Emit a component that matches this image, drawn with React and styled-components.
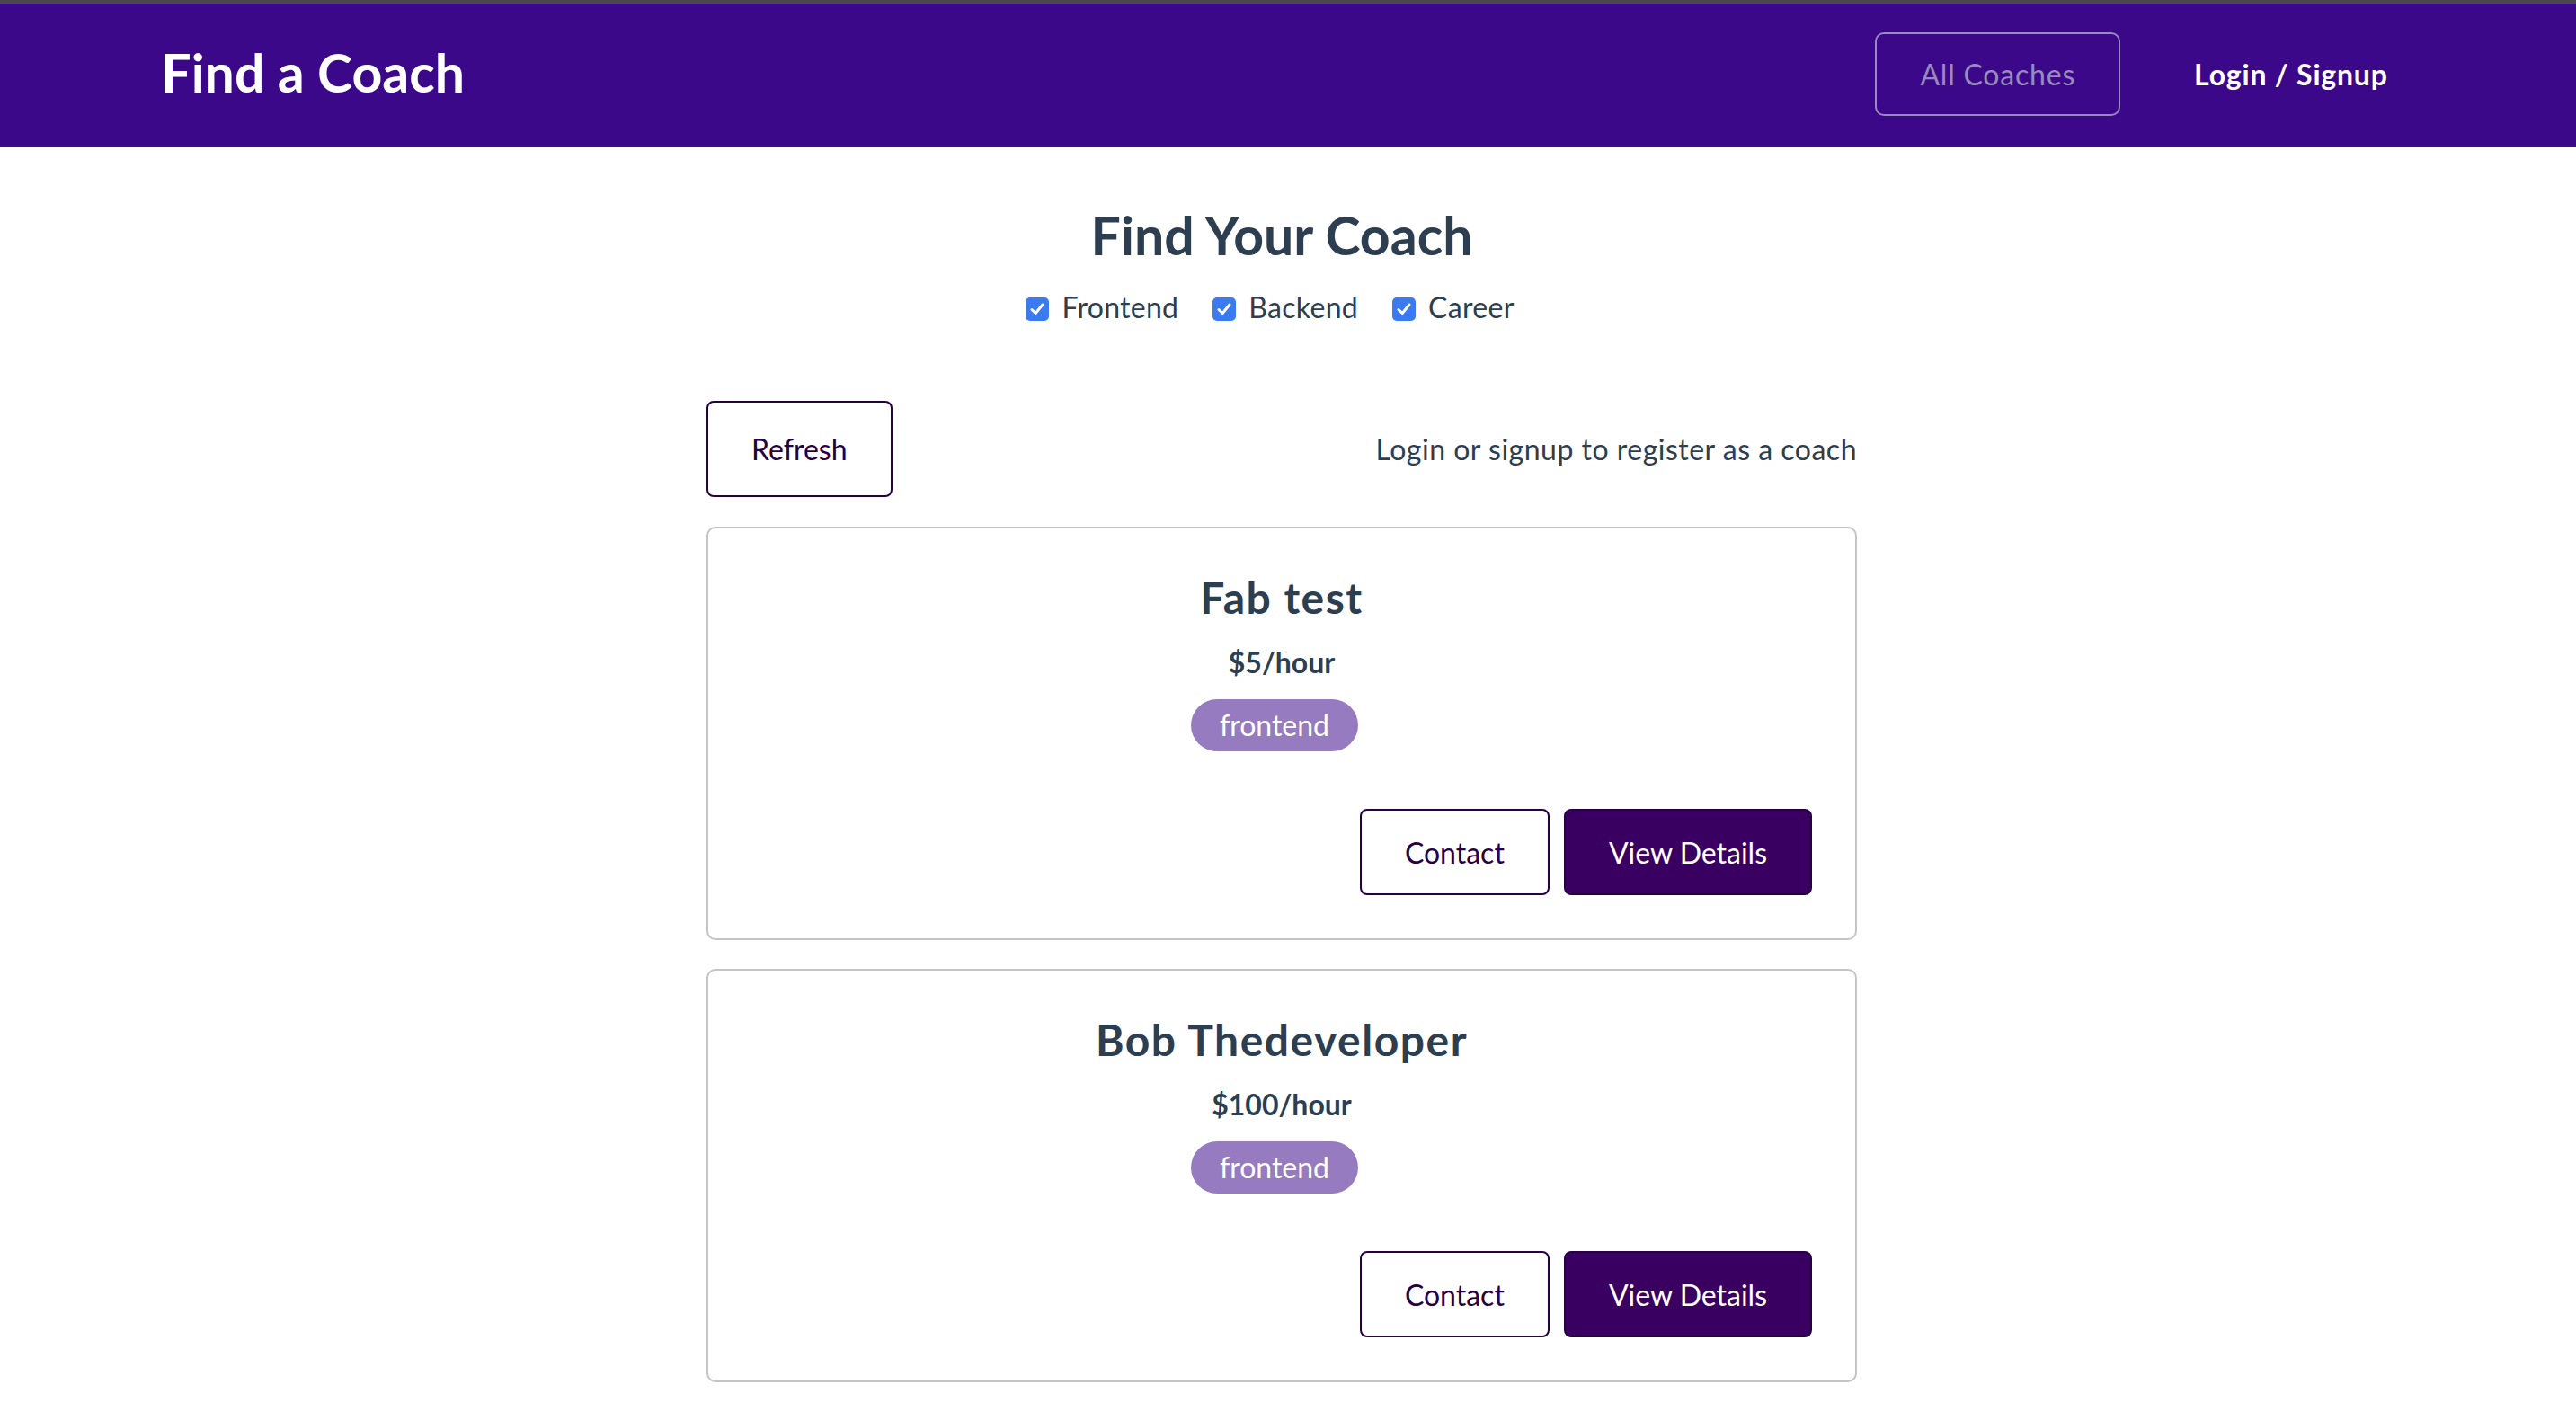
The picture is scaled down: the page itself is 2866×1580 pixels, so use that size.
import React from "react";
import styled, { createGlobalStyle } from "styled-components";

const GlobalStyle = createGlobalStyle`
  html, body {
    margin: 0;
    padding: 0;
    background: #ffffff;
    font-family: "Lato", "Liberation Sans", sans-serif;
    color: #2c3e50;
  }
  * { box-sizing: border-box; }
`;

const Page = styled.div`
  border-top: 4px solid #4a4a4a;
  min-height: 1580px;
`;

const Header = styled.header`
  height: 160px;
  padding-bottom: 4px;
  background: #3a0888;
  display: flex;
  align-items: center;
`;

const Nav = styled.nav`
  width: 90%;
  margin: 0 auto;
  display: flex;
  justify-content: space-between;
  align-items: center;
`;

const Brand = styled.h1`
  margin: 0 0 4px;
  padding: 0 36px;
  font-size: 59px;
  font-weight: 700;
  color: #ffffff;
`;

const NavList = styled.ul`
  list-style: none;
  margin: 0;
  padding: 0;
  display: flex;
  align-items: center;
`;

const NavItem = styled.li`
  margin: 0 16px;
`;

const NavLink = styled.a`
  display: inline-block;
  padding: 24px 48px;
  font-size: 32px;
  line-height: 41px;
  letter-spacing: 0.8px;
  text-decoration: none;
  border-radius: 10px;
  border: 2px solid ${(p) => (p.$active ? "#9a88c0" : "transparent")};
  color: ${(p) => (p.$active ? "#9a88c0" : "#ffffff")};
  font-weight: ${(p) => (p.$active ? 400 : 700)};
`;

const Main = styled.main`
  padding-right: 14px;
`;

const Content = styled.div`
  width: 1280px;
  margin: 0 auto;
`;

const FilterSection = styled.section`
  text-align: center;
`;

const Title = styled.h2`
  margin: 62px 0 0;
  font-size: 59px;
  line-height: 72px;
  font-weight: 700;
  color: #2c3e50;
`;

const FilterRow = styled.div`
  margin-top: 24px;
  height: 40px;
  display: flex;
  justify-content: center;
  align-items: center;
`;

const FilterOption = styled.label`
  display: flex;
  align-items: center;
  margin-right: 32px;
  font-size: 32px;
  line-height: 40px;
  letter-spacing: 0.3px;
  color: #2c3e50;
`;

const CheckBox = styled.span`
  width: 26px;
  height: 26px;
  margin: 3px 14px 0 6px;
  border-radius: 5px;
  background: #3a7bf2;
  display: inline-flex;
  align-items: center;
  justify-content: center;
`;

const Controls = styled.div`
  margin-top: 84px;
  display: flex;
  justify-content: space-between;
  align-items: center;
`;

const OutlineButton = styled.button`
  height: ${(p) => p.$height || 96}px;
  padding: 0 48px;
  margin-right: ${(p) => (p.$flush ? 0 : 16)}px;
  font-family: inherit;
  font-size: 32px;
  border-radius: 8px;
  border: 2px solid #270041;
  background: ${(p) => (p.$filled ? "#3a0061" : "#ffffff")};
  color: ${(p) => (p.$filled ? "#ffffff" : "#270041")};
  cursor: pointer;
`;

const Notice = styled.p`
  margin: 0;
  font-size: 32px;
  line-height: 40px;
  letter-spacing: 0.5px;
  color: #2c3e50;
`;

const CardList = styled.ul`
  list-style: none;
  margin: 33px 0 0;
  padding: 0;
`;

const Card = styled.li`
  border: 2px solid #c4c4c4;
  border-radius: 10px;
  padding: 32px;
  margin-bottom: 32px;
  text-align: center;
`;

const Name = styled.h3`
  margin: 16px 0 0;
  font-size: 48px;
  line-height: 58px;
  letter-spacing: 1.5px;
  font-weight: 700;
  color: #2c3e50;
`;

const Rate = styled.h4`
  margin: 23px 0 0;
  font-size: 32px;
  line-height: 40px;
  font-weight: 700;
  color: #2c3e50;
`;

const Badges = styled.div`
  margin-top: 21px;
`;

const Badge = styled.span`
  display: inline-block;
  padding: 8px 32px;
  margin-right: 16px;
  border-radius: 30px;
  background: #977bc0;
  color: #ffffff;
  font-size: 32px;
  font-weight: 400;
  line-height: 42px;
`;

const Actions = styled.div`
  margin: 64px 0 16px;
  display: flex;
  justify-content: flex-end;
`;

const Check = () => (
  <CheckBox>
    <svg width="18" height="18" viewBox="0 0 18 18" fill="none">
      <path
        d="M3 9.5 L7.2 13.5 L15 4"
        stroke="#ffffff"
        strokeWidth="3"
        strokeLinecap="round"
        strokeLinejoin="round"
      />
    </svg>
  </CheckBox>
);

const coaches = [
  { name: "Fab test", rate: 5, areas: ["frontend"] },
  { name: "Bob Thedeveloper", rate: 100, areas: ["frontend"] },
];

export default function App() {
  return (
    <>
      <GlobalStyle />
      <Page>
        <Header>
          <Nav>
            <Brand>Find a Coach</Brand>
            <NavList>
              <NavItem>
                <NavLink $active>All Coaches</NavLink>
              </NavItem>
              <NavItem>
                <NavLink>Login / Signup</NavLink>
              </NavItem>
            </NavList>
          </Nav>
        </Header>
        <Main>
          <Content>
            <FilterSection>
              <Title>Find Your Coach</Title>
              <FilterRow>
                {["Frontend", "Backend", "Career"].map((f) => (
                  <FilterOption key={f}>
                    <Check />
                    {f}
                  </FilterOption>
                ))}
              </FilterRow>
            </FilterSection>
            <Controls>
              <OutlineButton $height={107} $flush>
                Refresh
              </OutlineButton>
              <Notice>Login or signup to register as a coach</Notice>
            </Controls>
            <CardList>
              {coaches.map((c) => (
                <Card key={c.name}>
                  <Name>{c.name}</Name>
                  <Rate>${c.rate}/hour</Rate>
                  <Badges>
                    {c.areas.map((a) => (
                      <Badge key={a}>{a}</Badge>
                    ))}
                  </Badges>
                  <Actions>
                    <OutlineButton>Contact</OutlineButton>
                    <OutlineButton $filled>View Details</OutlineButton>
                  </Actions>
                </Card>
              ))}
            </CardList>
          </Content>
        </Main>
      </Page>
    </>
  );
}
